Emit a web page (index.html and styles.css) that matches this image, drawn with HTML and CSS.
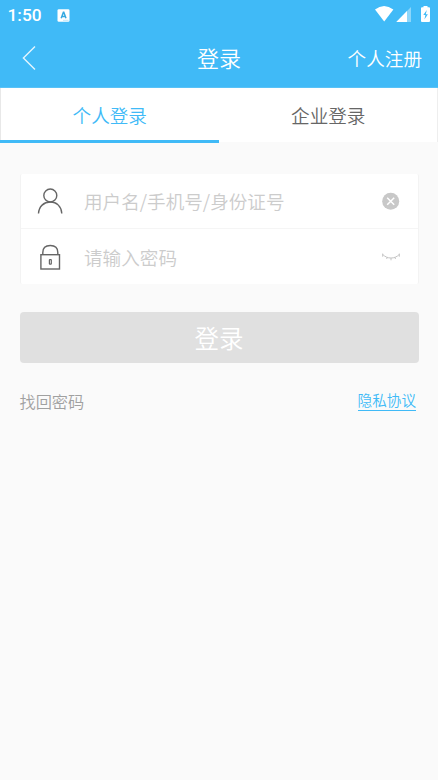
FILE: index.html
```html
<!DOCTYPE html>
<html lang="zh-CN">
<head>
<meta charset="utf-8">
<title>登录</title>
<link rel="stylesheet" href="styles.css">
</head>
<body>
<header class="top">
  <div class="status">
    <span class="time">1:50</span>
    <svg class="app" width="13" height="13" viewBox="0 0 13 13"><rect x=".5" y=".3" width="12" height="12.400" rx="1.300" fill="#fff"/><path d="M4.200 9.200 6.400 3.200h.4L9 9.200M5.100 7.400h3" fill="none" stroke="#36a9e0" stroke-width="1.500"/><path d="M6.500 11.300h1M8.500 11.300h1M10.500 11.300h.8" stroke="#70c5ef" stroke-width=".9"/></svg>
    <svg class="signals" width="56" height="18" viewBox="0 0 56 18"><path d="M0 3.600Q9-3.400 18.400 3.600L9.200 15.500Z" fill="#fff"/><path d="M36 1v15H21.300Z" fill="#8cd6fa"/><path d="M32 5v11H21.300Z" fill="#fff"/><path d="M48.500 1.200V0h4v1.200H54q1 0 1 1v12.800q0 1-1 1h-7q-1 0-1-1V2.200q0-1 1-1Z" fill="#fff"/><path d="m51.800 4-3.500 5.100h2.100l-1 4.500 3.500-5.300h-2.100Z" fill="#40baf7"/></svg>
  </div>
  <nav class="bar">
    <svg class="back" width="14" height="26" viewBox="0 0 14 26"><path d="M13 1.500 1.400 13 13 24.500" fill="none" stroke="#e3f5fe" stroke-width="1.400"/></svg>
    <h1 class="title">登录</h1>
    <a class="register">个人注册</a>
  </nav>
</header>
<div class="tabs">
  <div class="tab active">个人登录</div>
  <div class="tab">企业登录</div>
</div>
<main class="content">
  <div class="fields">
    <div class="field">
      <svg class="icon" width="26" height="28" viewBox="0 0 26 28" fill="none" stroke="#666" stroke-width="1.400"><circle cx="13.300" cy="8.500" r="6.500"/><path d="M1.500 26.500C1.900 19.500 6.800 15 13.300 15s11.100 4.500 11.500 11.500"/></svg>
      <span class="placeholder">用户名/手机号/身份证号</span>
      <svg class="action" width="18" height="18" viewBox="0 0 18 18"><circle cx="8.700" cy="9.200" r="8.500" fill="#c8c8c8"/><path d="m5.200 5.700 7 7m0-7-7 7" stroke="#fff" stroke-width="1.500"/></svg>
    </div>
    <div class="field second">
      <svg class="icon" width="26" height="28" viewBox="0 0 26 28" fill="none" stroke="#666" stroke-width="1.400"><rect x="3.900" y="11.700" width="18.600" height="14.300"/><path d="M5.800 11.700V9.500C5.800 5 8.800 2.500 13.300 2.500s7.500 2.500 7.500 7v2.200"/><rect x="12.400" y="16.600" width="1.900" height="4.600" rx=".5" stroke-width="1.200"/></svg>
      <span class="placeholder">请输入密码</span>
      <svg class="action" width="18" height="18" viewBox="0 0 18 18" fill="none" stroke="#c4c4c4" stroke-width="1"><path d="M.5 6.200C5 11.300 13 11.300 17.500 6.200M.7 5.700v3M5.200 9 4.700 11M9 10v2.300M12.800 9l.7 2M17.300 5.700v3"/></svg>
    </div>
  </div>
  <div class="submit">登录</div>
  <div class="links"><a class="forgot">找回密码</a><a class="privacy">隐私协议</a></div>
</main>
</body>
</html>
```
FILE: styles.css
```css
* { box-sizing: border-box; }
body {
  margin: 0;
  background: #fafafa;
  font-family: "Noto Sans CJK SC", sans-serif;
  font-weight: 350;
}
.top { height: 88px; background: #40baf7; border-bottom: 1px solid #59c2f7; color: #fff; }
.status { display: flex; align-items: center; height: 30px; padding: 0 8px 0 7.500px; }
.time { font: 500 17.300px/30px Roboto, sans-serif; width: 49.500px; }
.signals { margin-left: auto; margin-right: -1px; margin-top: -1px; }
.bar { display: grid; grid-template-columns: 1fr auto 1fr; align-items: center; height: 57px; padding: 0 16px 0 22px; }
.back { margin-top: -1px; }
.title { margin: -3px 0 0 -6px; font-size: 22px; font-weight: 350; line-height: 32px; }
.register { justify-self: end; margin-top: -1px; font-size: 18.600px; line-height: 28px; }
.tabs { display: flex; height: 55px; }
.tab {
  flex: 1;
  height: 54px;
  padding-left: 1px;
  background: #fff;
  border-right: 1px solid #eee;
  color: #666;
  font-size: 18.600px;
  line-height: 53px;
  text-align: center;
}
.tab.active {
  height: 55px;
  border-right: 0;
  border-bottom: 3px solid #40baf7;
  background: linear-gradient(to right, #e8e8e8 1px, #fff 1px);
  color: #40baf7;
}
.content { padding: 31px 19.500px 0; }
.fields { height: 110px; border: solid #f3f3f3; border-width: 0 1px; border-radius: 2px; background: #fff; }
.field { display: flex; align-items: center; height: 54px; padding: 0 17.500px 0 16.500px; }
.second { height: 56px; border-top: 1px solid #f5f5f5; }
.icon { flex: none; margin-right: 21px; }
.placeholder { flex: 1; color: #ccc; font-size: 18.600px; line-height: 28px; white-space: nowrap; }
.submit {
  height: 51px;
  margin-top: 28px;
  border-radius: 4px;
  background: #e0e0e0;
  color: #fff;
  font-size: 24.500px;
  line-height: 51px;
  text-align: center;
}
.links { display: flex; justify-content: space-between; align-items: flex-start; margin-top: 26px; padding-right: 2.500px; }
.forgot { color: #a0a0a0; font-size: 16.200px; line-height: 24px; }
.privacy { margin-top: 1px; border-bottom: 1px solid #40baf7; color: #40baf7; font-size: 14.600px; line-height: 20px; }
```
